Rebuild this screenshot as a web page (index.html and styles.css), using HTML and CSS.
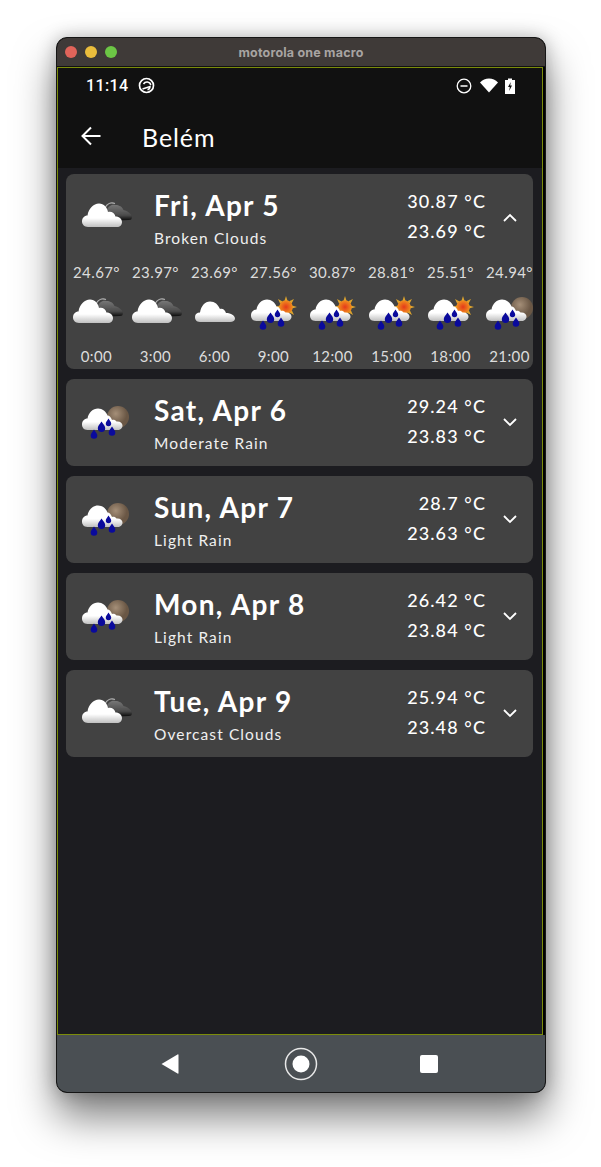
FILE: index.html
```html
<!DOCTYPE html>
<html lang="en">
<head>
    <meta charset="UTF-8">
    <meta name="viewport" content="width=device-width, initial-scale=1.0">
    <title>Belém forecast</title>
    <link rel="stylesheet" href="styles.css">
</head>
<body>

    <svg class="sprites" width="0" height="0" aria-hidden="true">
        <defs>
            <linearGradient id="whiteGrad" x1="0" y1="0" x2="0" y2="1">
                <stop offset="0" stop-color="#ffffff"/>
                <stop offset="0.62" stop-color="#ffffff"/>
                <stop offset="1" stop-color="#c0c0c0"/>
            </linearGradient>
            <linearGradient id="darkGrad" x1="0" y1="0" x2="0" y2="1">
                <stop offset="0" stop-color="#777777"/>
                <stop offset="0.65" stop-color="#4c4c4c"/>
                <stop offset="1" stop-color="#0a0a0a"/>
            </linearGradient>
            <radialGradient id="sunGrad">
                <stop offset="0" stop-color="#e5391a"/>
                <stop offset="1" stop-color="#f0901e"/>
            </radialGradient>
            <radialGradient id="moonGrad" cx="0.4" cy="0.35">
                <stop offset="0" stop-color="#a58f78"/>
                <stop offset="1" stop-color="#6a5745"/>
            </radialGradient>
            <filter id="soft"><feGaussianBlur stdDeviation="0.35"/></filter>
            <path id="cloudShape" d="M12 36C8 36 6 33 6 30.500C6 27 8.500 24.500 11.500 24.500C12.500 17.500 17.500 12.500 23 12.500C28 12.500 31 16.500 32 21C35.500 20 38.500 22 39.500 25.500C43.500 25.500 46 28 46 31C46 34 44 36 41 36Z"/>
            <path id="rainCloud" d="M12.500 34C8.500 34 7 31 7 28.500C7 25 9.500 22.500 12.500 22.500C13.500 16.500 18 12.500 23 12.500C27.500 12.500 31 15.500 32.500 19.500C34.500 19.500 36 21.500 37 24C38.500 23.500 40.500 24 41.500 25.500C45 25 47.500 27 47.500 29.500C47.500 32 45.500 34 42.500 34Z"/>
            <g id="drops" fill="#0a0a9c">
                <path d="M19 33.500c2 3 3.300 4.300 3.300 6a3.300 3.300 0 0 1-6.600 0c0-1.700 1.300-3 3.300-6Z"/>
                <path d="M26.500 25.500c2.300 3.300 3.700 4.800 3.700 6.700a3.700 3.700 0 0 1-7.400 0c0-1.900 1.400-3.400 3.700-6.700Z"/>
                <path d="M33.500 22.500c1.700 2.500 2.700 3.600 2.700 5a2.700 2.700 0 0 1-5.400 0c0-1.400 1-2.500 2.700-5Z"/>
                <path d="M37 30.500c2 3 3.300 4.300 3.300 6a3.300 3.300 0 0 1-6.600 0c0-1.700 1.300-3 3.300-6Z"/>
            </g>
            <symbol id="iconBroken" viewBox="0 0 60 50">
                <path d="M29 17C31 12.500 35 11 39 12.500" fill="none" stroke="#b0b0b0" stroke-width="1.100"/>
                <path d="M30 22C31 15.500 35.500 13 39.500 14C44 14 46.500 16.500 47.500 19C52 20 55 23 56 26C56 27.800 55 29 53 29L38 29.500Z" fill="url(#darkGrad)" filter="url(#soft)"/>
                <use href="#cloudShape" fill="url(#whiteGrad)" filter="url(#soft)"/>
            </symbol>
            <symbol id="iconOvercast" viewBox="0 0 60 50">
                <path d="M15 35C11 35 10 32 10 30C10 27 12 25.500 15 25.500C16 19 20 14.500 25 14.500C30 14.500 33 17.500 35 22C37 21 40 22.500 41 26C46 26 50 28.500 50 31.500C50 33.500 48 35 45 35Z" fill="url(#whiteGrad)" filter="url(#soft)"/>
            </symbol>
            <symbol id="iconRainSun" viewBox="0 0 60 50">
                <g fill="#dda42e">
                    <path d="M42 9l1.600 5h-3.200ZM53 20l-5 1.600v-3.200ZM34 12l4.600 2.400-2.400 2.400ZM50 12l-2.400 4.600-2.400-2.400ZM50 28l-4.600-2.400 2.400-2.400ZM31 20l5-1.600v3.200Z"/>
                </g>
                <circle cx="42" cy="20" r="6.800" fill="url(#sunGrad)"/>
                <use href="#rainCloud" fill="url(#whiteGrad)" filter="url(#soft)"/>
                <use href="#drops"/>
            </symbol>
            <symbol id="iconRainMoon" viewBox="0 0 60 50">
                <circle cx="42" cy="21" r="11" fill="url(#moonGrad)"/>
                <g transform="translate(-1 0)">
                    <use href="#rainCloud" fill="url(#whiteGrad)" filter="url(#soft)"/>
                    <use href="#drops"/>
                </g>
            </symbol>
        </defs>
    </svg>

    <div class="window">
        <div class="titlebar">
            <span class="dot dot-red"></span>
            <span class="dot dot-yellow"></span>
            <span class="dot dot-green"></span>
            <span class="window-title">motorola one macro</span>
        </div>

        <div class="screen">
            <div class="statusbar">
                <span class="clock">11:14</span>
                <svg class="status-app" width="17" height="17" viewBox="0 0 17 17" fill="none" stroke="#fff">
                    <circle cx="8.500" cy="8.500" r="7" stroke-width="1.700"/>
                    <path d="M5.500 7A4 4 0 0 1 12.800 8" stroke-width="1.500"/>
                    <path d="M4.500 12L12 9.500C12 11 11 12.300 9.500 12.800" stroke-width="1.500"/>
                </svg>
                <span class="status-spacer"></span>
                <svg width="16" height="16" viewBox="0 0 16 16" fill="none" stroke="#fff" stroke-width="1.300">
                    <circle cx="8" cy="8" r="6.800"/>
                    <path d="M4.500 8h7" stroke-width="1.500"/>
                </svg>
                <svg class="status-wifi" width="18" height="15" viewBox="0 0 18 15" fill="#fff">
                    <path d="M0 4.500C2.500 2 5.500 0.500 9 0.500C12.500 0.500 15.500 2 18 4.500L9 14.500Z"/>
                </svg>
                <svg class="status-batt" width="10" height="16" viewBox="0 0 10 16">
                    <path d="M3 0.500h4v1.500h3v14h-10v-14h3Z" fill="#fff"/>
                    <path d="M5.800 4L3 9h1.800L4.200 13L7 7.500H5.200Z" fill="#111"/>
                </svg>
            </div>

            <header class="appbar">
                <svg class="back" width="20" height="20" viewBox="0 0 20 20" fill="none" stroke="#fff" stroke-width="2">
                    <path d="M19.500 10H2M10 1.500L1.500 10L10 18.500"/>
                </svg>
                <h1 class="city">Belém</h1>
            </header>

            <main class="days">
                <section class="card">
                    <div class="card-head">
                        <svg class="day-icon"><use href="#iconBroken"/></svg>
                        <div class="day-info">
                            <h2>Fri, Apr 5</h2>
                            <p>Broken Clouds</p>
                        </div>
                        <div class="day-temps"><span>30.87 °C</span><span>23.69 °C</span></div>
                        <svg class="chevron" width="14" height="9" viewBox="0 0 14 9"><path d="M1 8L7 2L13 8"/></svg>
                    </div>
                    <div class="hours">
                        <div class="hour"><span>24.67°</span><svg class="hour-icon"><use href="#iconBroken"/></svg><span>0:00</span></div>
                        <div class="hour"><span>23.97°</span><svg class="hour-icon"><use href="#iconBroken"/></svg><span>3:00</span></div>
                        <div class="hour"><span>23.69°</span><svg class="hour-icon"><use href="#iconOvercast"/></svg><span>6:00</span></div>
                        <div class="hour"><span>27.56°</span><svg class="hour-icon"><use href="#iconRainSun"/></svg><span>9:00</span></div>
                        <div class="hour"><span>30.87°</span><svg class="hour-icon"><use href="#iconRainSun"/></svg><span>12:00</span></div>
                        <div class="hour"><span>28.81°</span><svg class="hour-icon"><use href="#iconRainSun"/></svg><span>15:00</span></div>
                        <div class="hour"><span>25.51°</span><svg class="hour-icon"><use href="#iconRainSun"/></svg><span>18:00</span></div>
                        <div class="hour"><span>24.94°</span><svg class="hour-icon"><use href="#iconRainMoon"/></svg><span>21:00</span></div>
                    </div>
                </section>

                <section class="card">
                    <div class="card-head">
                        <svg class="day-icon"><use href="#iconRainMoon"/></svg>
                        <div class="day-info">
                            <h2>Sat, Apr 6</h2>
                            <p>Moderate Rain</p>
                        </div>
                        <div class="day-temps"><span>29.24 °C</span><span>23.83 °C</span></div>
                        <svg class="chevron" width="14" height="9" viewBox="0 0 14 9"><path d="M1 1L7 7L13 1"/></svg>
                    </div>
                </section>

                <section class="card">
                    <div class="card-head">
                        <svg class="day-icon"><use href="#iconRainMoon"/></svg>
                        <div class="day-info">
                            <h2>Sun, Apr 7</h2>
                            <p>Light Rain</p>
                        </div>
                        <div class="day-temps"><span>28.7 °C</span><span>23.63 °C</span></div>
                        <svg class="chevron" width="14" height="9" viewBox="0 0 14 9"><path d="M1 1L7 7L13 1"/></svg>
                    </div>
                </section>

                <section class="card">
                    <div class="card-head">
                        <svg class="day-icon"><use href="#iconRainMoon"/></svg>
                        <div class="day-info">
                            <h2>Mon, Apr 8</h2>
                            <p>Light Rain</p>
                        </div>
                        <div class="day-temps"><span>26.42 °C</span><span>23.84 °C</span></div>
                        <svg class="chevron" width="14" height="9" viewBox="0 0 14 9"><path d="M1 1L7 7L13 1"/></svg>
                    </div>
                </section>

                <section class="card">
                    <div class="card-head">
                        <svg class="day-icon"><use href="#iconBroken"/></svg>
                        <div class="day-info">
                            <h2>Tue, Apr 9</h2>
                            <p>Overcast Clouds</p>
                        </div>
                        <div class="day-temps"><span>25.94 °C</span><span>23.48 °C</span></div>
                        <svg class="chevron" width="14" height="9" viewBox="0 0 14 9"><path d="M1 1L7 7L13 1"/></svg>
                    </div>
                </section>
            </main>
        </div>

        <nav class="navbar">
            <svg class="nav-back" width="18" height="20" viewBox="0 0 18 20" fill="#fff">
                <path d="M16.500 0.500L0.500 10L16.500 19.500Q17.500 20 17.500 19V1Q17.500 0 16.500 0.500Z"/>
            </svg>
            <svg class="nav-home" width="34" height="34" viewBox="0 0 34 34">
                <circle cx="17" cy="17" r="15.500" fill="none" stroke="#e8e8e8" stroke-width="1.500"/>
                <circle cx="17" cy="17" r="8.500" fill="#fff"/>
            </svg>
            <span class="nav-recent"></span>
        </nav>
    </div>

</body>
</html>
```

FILE: styles.css
```css
html, body {
    height: 100%;
}
body {
    font-family: "Lato", "Liberation Sans", sans-serif;
    background-color: white;
    color: white;
    margin: 0;
    padding: 0;
    overflow: hidden;
}
.sprites {
    position: absolute;
}
.window {
    box-sizing: border-box;
    width: 490px;
    margin: 37px 0 0 56px;
    border: 1px solid #151515;
    border-radius: 11px;
    background-color: #000;
    overflow: hidden;
    box-shadow: 0 24px 40px rgba(0, 0, 0, 0.5), 0 0 18px rgba(0, 0, 0, 0.25);
}
.titlebar {
    box-sizing: border-box;
    height: 29px;
    display: flex;
    align-items: center;
    padding-left: 8px;
    gap: 8px;
    background-color: #3f3a38;
    border-bottom: 1px solid #111;
    position: relative;
}
.dot {
    width: 12px;
    height: 12px;
    border-radius: 50%;
}
.dot-red { background-color: #e0645a; }
.dot-yellow { background-color: #eabd3c; }
.dot-green { background-color: #6cc645; }
.window-title {
    position: absolute;
    left: 0;
    right: 0;
    text-align: center;
    font-family: "Inter", sans-serif;
    font-size: 12.500px;
    font-weight: 700;
    letter-spacing: 0.2px;
    color: #a8a4a2;
}
.screen {
    box-sizing: border-box;
    width: 486px;
    height: 968px;
    border: 1px solid #7b8c0a;
    background-color: #1c1c20;
    display: flex;
    flex-direction: column;
}
.statusbar {
    height: 33px;
    flex-shrink: 0;
    display: flex;
    align-items: center;
    padding: 2px 27px 0 28px;
    box-sizing: border-box;
    background-color: #111;
}
.clock {
    font-family: "Roboto", sans-serif;
    font-size: 16px;
    font-weight: 500;
    letter-spacing: 0.4px;
}
.status-app {
    margin-left: 9px;
}
.status-spacer {
    flex: 1;
}
.status-wifi {
    margin-left: 8px;
}
.status-batt {
    margin-left: 7px;
}
.appbar {
    height: 67px;
    flex-shrink: 0;
    display: flex;
    align-items: center;
    padding: 2px 0 0 23px;
    box-sizing: border-box;
    background-color: #111;
}
.back {
    margin-top: 1px;
}
.city {
    margin: 2px 0 0 41px;
    font-size: 25px;
    font-weight: 400;
    letter-spacing: 0.9px;
}
.days {
    display: flex;
    flex-direction: column;
    gap: 10px;
    padding: 6px 9px 0 8px;
}
.card {
    background-color: #424242;
    border-radius: 8px;
    overflow: hidden;
}
.card-head {
    height: 87px;
    display: flex;
    align-items: center;
    padding-left: 10px;
}
.day-icon {
    width: 60px;
    height: 50px;
    margin-top: -3px;
}
.day-info {
    margin-left: 18px;
    flex: 1;
}
.day-info h2 {
    margin: -1px 0 0;
    font-size: 28px;
    line-height: 34px;
    font-weight: 700;
    letter-spacing: 1.3px;
}
.day-info p {
    margin: 7px 0 0;
    font-size: 15.500px;
    line-height: 18px;
    letter-spacing: 1.1px;
    color: #f0f0f0;
}
.day-temps {
    display: flex;
    flex-direction: column;
    align-items: flex-end;
    gap: 12px;
    margin-top: -3px;
    font-size: 18px;
    line-height: 18px;
    font-weight: 500;
    letter-spacing: 1.1px;
}
.chevron {
    margin: 0 16px 0 17px;
    fill: none;
    stroke: #fff;
    stroke-width: 1.800;
}
.hours {
    display: flex;
    margin-top: 2px;
    padding-left: 1px;
    height: 106px;
}
.hour {
    flex: 0 0 59px;
    min-width: 0;
    display: flex;
    flex-direction: column;
    align-items: center;
    font-size: 15px;
    line-height: 18px;
    letter-spacing: 0.4px;
    color: #dcdcdc;
}
.hour-icon {
    width: 60px;
    height: 50px;
    flex-shrink: 0;
    margin: 6px -1px 10px;
}
.navbar {
    height: 57px;
    display: flex;
    align-items: center;
    padding-left: 104px;
    box-sizing: border-box;
    background-color: #4a4f53;
}
.nav-home {
    margin-left: 105px;
}
.nav-recent {
    width: 18px;
    height: 18px;
    margin-left: 102px;
    border-radius: 2px;
    background-color: #fff;
}
```
